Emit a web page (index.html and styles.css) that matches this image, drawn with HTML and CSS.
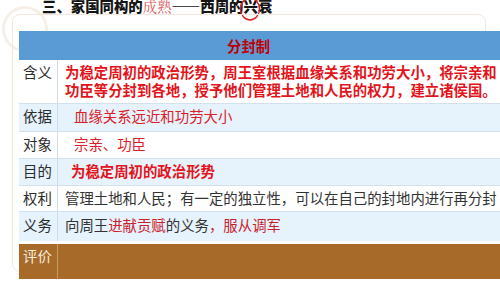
FILE: index.html
```html
<!DOCTYPE html>
<html lang="zh">
<head>
<meta charset="utf-8">
<link rel="stylesheet" href="styles.css">
</head>
<body>
<div class="page">
  <div class="deco-ring"></div>
  <h1 class="title">三、家国同构的<span class="ripe">成熟</span>——西周的<span class="mark">兴</span>衰</h1>
  <svg class="circle" width="24" height="26" viewBox="0 0 24 26"><ellipse cx="12" cy="12" rx="9.5" ry="11" fill="none" stroke="#d8232a" stroke-width="1.4"/></svg>
  <div class="card">
    <div class="table">
      <div class="row head"><div class="head-text">分封制</div></div>
      <div class="row r-hanyi">
        <div class="label">含义</div>
        <div class="cell wide red bold">为稳定周初的政治形势，周王室根据血缘关系和功劳大小，将宗亲和功臣等分封到各地，授予他们管理土地和人民的权力，建立诸侯国。</div>
      </div>
      <div class="row alt r-yiju">
        <div class="label">依据</div>
        <div class="cell red indent">血缘关系远近和功劳大小</div>
      </div>
      <div class="row r-duix">
        <div class="label">对象</div>
        <div class="cell red indent">宗亲、功臣</div>
      </div>
      <div class="row alt r-mudi">
        <div class="label">目的</div>
        <div class="cell red bold indent2">为稳定周初的政治形势</div>
      </div>
      <div class="row r-quanli">
        <div class="label">权利</div>
        <div class="cell nowrap">管理土地和人民；有一定的独立性，可以在自己的封地内进行再分封</div>
      </div>
      <div class="row alt r-yiwu">
        <div class="label">义务</div>
        <div class="cell">向周王<span class="crimson">进献贡赋</span>的义务<span class="crimson">，服从调军</span></div>
      </div>
      <div class="row brown">
        <div class="label light">评价</div>
        <div class="cell"></div>
      </div>
    </div>
  </div>
</div>
</body>
</html>
```

FILE: styles.css
```css
html, body {
  margin: 0;
  padding: 0;
  background: #ffffff;
}
.page {
  position: relative;
  width: 500px;
  height: 281px;
  overflow: hidden;
  font-family: "Noto Sans CJK SC", "Noto Sans", sans-serif;
  font-size: 14.4px;
  color: #333333;
}
.deco-ring {
  position: absolute;
  left: 2px;
  top: 6px;
  width: 40px;
  height: 40px;
  border: 3px solid #f6efe8;
  border-radius: 50%;
}
.title {
  position: relative;
  margin: -3px 0 0 42px;
  height: 17px;
  font-size: 14.4px;
  line-height: 18px;
  font-weight: 900;
  color: #151515;
  white-space: nowrap;
}
.ripe {
  color: #e06060;
  font-family: "Noto Serif CJK SC", "Liberation Serif", serif;
  font-weight: 400;
}
.circle {
  position: absolute;
  left: 238px;
  top: -3px;
}
.card {
  position: relative;
  margin-left: 12px;
  width: 474px;
  height: 258px;
  border: 1px solid #f2e7dd;
  border-radius: 8px;
  padding: 16px 0 0 6px;
  box-sizing: border-box;
  overflow: visible;
}
.table {
  width: 500px;
  display: flex;
  flex-direction: column;
}
.row {
  display: flex;
  border-bottom: 1px solid #d3e0ee;
  background: #ffffff;
}
.row.alt {
  background: #e6f2fc;
}
.head {
  height: 29px;
  background: #5b9bd5;
  border-bottom: none;
  align-items: center;
}
.head-text {
  padding-left: 208px;
  color: #c00000;
  font-weight: 700;
  font-size: 14.4px;
}
.label {
  width: 39px;
  flex: none;
  box-sizing: border-box;
  padding-left: 4px;
  border-right: 1px solid #cfdcec;
  color: #2b2b2b;
  line-height: 18px;
  padding-top: 3px;
}
.cell {
  padding: 3px 0 0 7px;
  line-height: 18px;
  width: 430px;
}
.cell.wide {
  width: 436px;
  flex: none;
}
.nowrap {
  white-space: nowrap;
  width: auto;
}
.red { color: #e3141b; }
.bold { font-weight: 700; }
.indent { padding-left: 16px; color: #d92127; }
.indent2 { padding-left: 13px; }
.crimson { color: #c9222c; }
.r-hanyi { height: 43px; }
.r-yiju { height: 27px; }
.r-duix { height: 26px; }
.r-mudi { height: 26px; }
.r-quanli { height: 25px; }
.r-yiwu { height: 29px; border-bottom: 3px solid #ffffff; }
.r-yiwu .cell, .r-yiwu .label { padding-top: 4px; }
.brown {
  height: 35px;
  background: #a86a29;
  border-bottom: none;
}
.brown .label {
  border-right: 1px solid #c89a66;
  color: #f6ecdf;
}
```
